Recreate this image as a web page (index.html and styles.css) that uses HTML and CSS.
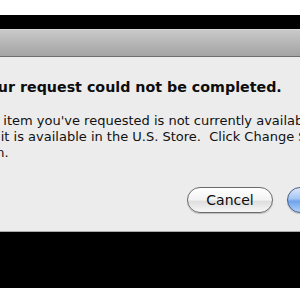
FILE: index.html
```html
<!DOCTYPE html>
<html>
<head>
<meta charset="utf-8">
<link rel="stylesheet" href="styles.css">
</head>
<body>
<div class="top"></div>
<div class="screen">
  <div class="window">
    <div class="titlebar"></div>
    <div class="dialog">
      <div class="content">
        <h1 class="title">Your request could not be completed.</h1>
        <p class="msg"><span class="line">The item you've requested is not currently available in the Canadian Store,</span><span class="line">but it is available in the U.S. Store.  Click Change Store to switch stores and try again</span><span class="line">then.</span></p>
        <div class="buttons">
          <button class="btn">Cancel</button>
          <button class="btn default">Change Store</button>
        </div>
      </div>
    </div>
  </div>
</div>
</body>
</html>
```
FILE: styles.css
```css
html, body { margin: 0; padding: 0; background: #fff; }
body { width: 300px; height: 300px; overflow: hidden; font-family: "DejaVu Sans", sans-serif; }
.top { height: 15px; background: #fff; }
.screen { background: #000; padding: 14px 0 56px 0; }
.window { overflow: hidden; }
.titlebar {
  height: 26px;
  border-top: 1px solid #d8d8d8;
  border-bottom: 1px solid #6e6e6e;
  background: linear-gradient(#c9c9c9, #a3a3a3);
}
.dialog {
  height: 174px;
  background: #ececec;
  border-bottom: 1px solid #a9a9a9;
  overflow: hidden;
}
.content { margin-left: -25px; padding-top: 21px; width: 700px; }
.title {
  margin: 0 0 0 4px;
  font-size: 14.25px;
  line-height: 18px;
  font-weight: bold;
  color: #0d0d0d;
  white-space: nowrap;
}
.msg {
  margin: 17px 0 0 0;
  font-size: 13px;
  line-height: 16px;
  color: #111;
}
.line { display: block; white-space: pre; }
.buttons { display: flex; gap: 14px; padding-left: 212px; margin-top: 26px; }
.btn {
  height: 26px;
  width: 86px;
  border-radius: 13px;
  border: 1px solid #6a6a6a;
  background: linear-gradient(#ffffff 0%, #f3f3f3 50%, #dedede 55%, #f6f6f6 100%);
  font-family: "DejaVu Sans", sans-serif;
  font-size: 14px;
  color: #0d0d0d;
  padding: 0;
  box-shadow: 0 1px 1px rgba(0,0,0,0.2);
}
.default {
  width: 120px;
  border-color: #4a5d86;
  background: linear-gradient(#dbe9fb 0%, #a3c5f3 45%, #6fa3ec 55%, #aed0fb 100%);
}
```
